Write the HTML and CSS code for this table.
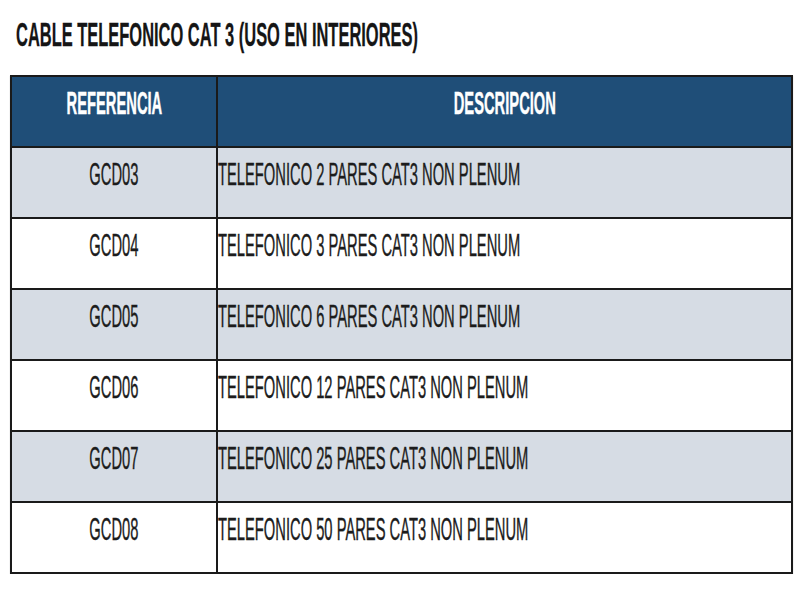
FILE: index.html
```html
<!DOCTYPE html>
<html lang="es">
<head>
<meta charset="utf-8">
<title>Cable telefonico CAT 3</title>
<link rel="stylesheet" href="styles.css">
</head>
<body>
<div class="page">
  <h1 class="title"><span class="tall">CABLE TELEFONICO CAT 3 (USO EN INTERIORES)</span></h1>
  <div class="table">
    <div class="row head">
      <div class="cell ref"><span class="tall">REFERENCIA</span></div>
      <div class="cell desc center"><span class="tall">DESCRIPCION</span></div>
    </div>
    <div class="row alt">
      <div class="cell ref"><span class="tall">GCD03</span></div>
      <div class="cell desc"><span class="tall">TELEFONICO 2 PARES CAT3 NON PLENUM</span></div>
    </div>
    <div class="row">
      <div class="cell ref"><span class="tall">GCD04</span></div>
      <div class="cell desc"><span class="tall">TELEFONICO 3 PARES CAT3 NON PLENUM</span></div>
    </div>
    <div class="row alt">
      <div class="cell ref"><span class="tall">GCD05</span></div>
      <div class="cell desc"><span class="tall">TELEFONICO 6 PARES CAT3 NON PLENUM</span></div>
    </div>
    <div class="row">
      <div class="cell ref"><span class="tall">GCD06</span></div>
      <div class="cell desc"><span class="tall">TELEFONICO 12 PARES CAT3 NON PLENUM</span></div>
    </div>
    <div class="row alt">
      <div class="cell ref"><span class="tall">GCD07</span></div>
      <div class="cell desc"><span class="tall">TELEFONICO 25 PARES CAT3 NON PLENUM</span></div>
    </div>
    <div class="row last">
      <div class="cell ref"><span class="tall">GCD08</span></div>
      <div class="cell desc"><span class="tall">TELEFONICO 50 PARES CAT3 NON PLENUM</span></div>
    </div>
  </div>
</div>
</body>
</html>
```
FILE: styles.css
```css
html, body {
  margin: 0;
  padding: 0;
  background: #ffffff;
}

body {
  font-family: "Liberation Sans", Arial, sans-serif;
  color: #1c1c1c;
}

.page {
  padding: 26px 0 0 10px;
}

/* Text in this sheet is a tall, narrow face: set small and stretched vertically */
.tall {
  display: inline-block;
  white-space: nowrap;
  transform: scale(0.95, 2);
  transform-origin: center center;
}

.title {
  margin: 0 0 32px 6px;
  font-size: 17px;
  line-height: 17px;
  font-weight: bold;
  white-space: nowrap;
  color: #151515;
  -webkit-text-stroke: 0.15px currentColor;
}

.title .tall {
  transform: scale(0.968, 2);
  transform-origin: left center;
}

.table {
  width: 783px;
  box-sizing: border-box;
  border: 2px solid #1a1a1a;
  box-shadow: 0 1px 1px rgba(0, 0, 0, 0.25);
}

.row {
  display: grid;
  grid-template-columns: 204px 1fr;
  height: 71px;
  box-sizing: border-box;
  border-bottom: 2px solid #1a1a1a;
  background: #ffffff;
}

.row.last {
  height: 69px;
  border-bottom: none;
}

.row.alt {
  background: #d6dce4;
}

.row.head {
  background: #1f4e78;
  color: #ffffff;
  font-weight: bold;
}

.cell {
  box-sizing: border-box;
  padding-top: 19px;
  font-size: 15.5px;
  line-height: 15.5px;
  -webkit-text-stroke: 0.2px currentColor;
}

.ref {
  text-align: center;
}

.desc {
  border-left: 2px solid #1a1a1a;
}

.desc.center {
  text-align: center;
}

.desc .tall {
  transform-origin: left center;
}

.desc.center .tall {
  transform-origin: center center;
}
```
